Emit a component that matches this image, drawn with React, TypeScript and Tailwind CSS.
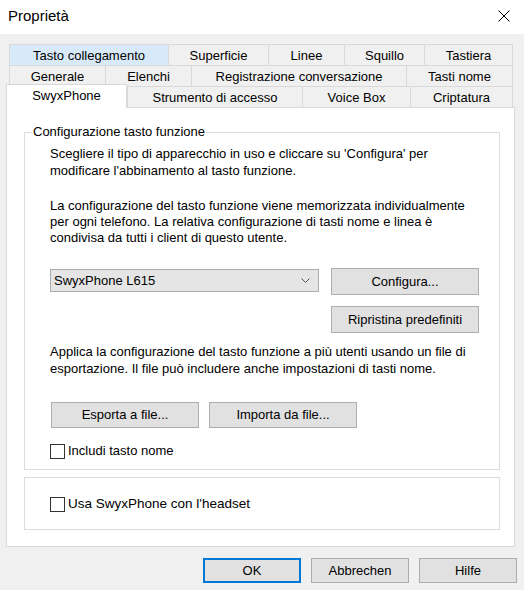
import type { ReactNode } from "react";

// ─── Data ────────────────────────────────────────────────────────────────────

type Tab = { label: string; w: string; hover?: boolean };

const row1: Tab[] = [
    { label: "Tasto collegamento", w: "w-[159px]", hover: true },
    { label: "Superficie", w: "w-[100px]" },
    { label: "Linee", w: "w-[76px]" },
    { label: "Squillo", w: "w-[80px]" },
    { label: "Tastiera", w: "w-[89px]" },
];

const row2: Tab[] = [
    { label: "Generale", w: "w-[96px]" },
    { label: "Elenchi", w: "w-[86px]" },
    { label: "Registrazione conversazione", w: "w-[215px]" },
    { label: "Tasti nome", w: "w-[107px]" },
];

const row3: Tab[] = [
    { label: "Strumento di accesso", w: "w-[175px]" },
    { label: "Voice Box", w: "w-[108px]" },
    { label: "Criptatura", w: "w-[103px]" },
];

// ─── Small pieces ────────────────────────────────────────────────────────────

function TabCell({ tab, last }: { tab: Tab; last: boolean }) {
    return (
        <div
            className={`${tab.w} shrink-0 flex items-center justify-center pt-px border-t border-l border-[#d9d9d9] ${last ? "border-r" : ""} ${tab.hover ? "bg-[#d8eaf9]" : "bg-[#f0f0f0]"}`}
        >
            {tab.label}
        </div>
    );
}

function TabRow({ tabs }: { tabs: Tab[] }) {
    return (
        <div className="flex h-[21px]">
            {tabs.map((t, i) => (
                <TabCell key={t.label} tab={t} last={i === tabs.length - 1} />
            ))}
        </div>
    );
}

function Button({
    children,
    className = "",
}: {
    children: ReactNode;
    className?: string;
}) {
    return (
        <div
            className={`shrink-0 flex items-center justify-center bg-[#e1e1e1] border border-[#adadad] ${className}`}
        >
            {children}
        </div>
    );
}

function Checkbox({ label, className = "" }: { label: string; className?: string }) {
    return (
        <div className="flex items-center gap-[3px]">
            <div className="w-[15px] h-[15px] bg-white border border-[#333333]" />
            <span className={className}>{label}</span>
        </div>
    );
}

// ─── Main component ──────────────────────────────────────────────────────────

export default function App() {
    return (
        <div
            className="w-[524px] h-[590px] bg-[#f0f0f0] text-black text-[13px] leading-[16px] overflow-hidden"
            style={{ fontFamily: '"Liberation Sans", Arial, sans-serif' }}
        >
            {/* Title bar */}
            <div className="h-[34px] bg-white flex items-center justify-between pl-[8px] pr-[14px]">
                <span className="text-[15px] -mt-[2px]">Proprietà</span>
                <svg width="12" height="12" viewBox="0 0 12 12" className="-mt-[3px]">
                    <path d="M0.5 0.5 L11.5 11.5 M11.5 0.5 L0.5 11.5" stroke="#000" strokeWidth="1" />
                </svg>
            </div>

            {/* Tabs */}
            <div className="mt-[10px] ml-[9px] w-[504px]">
                <TabRow tabs={row1} />
                <TabRow tabs={row2} />
                <div className="flex h-[21px]">
                    <div className="relative z-10 w-[121px] shrink-0 -ml-[3px] -mt-[2px] -mb-px bg-white border-t border-l border-r border-[#d9d9d9] flex items-center justify-center pb-[2px]">
                        SwyxPhone
                    </div>
                    {row3.map((t, i) => (
                        <TabCell key={t.label} tab={t} last={i === row3.length - 1} />
                    ))}
                </div>
            </div>

            {/* Page */}
            <div className="ml-[6px] w-[509px] h-[440px] bg-white border border-[#d9d9d9] pt-[24px] pl-[17px]">
                {/* Group: Configurazione tasto funzione */}
                <div className="relative w-[476px] h-[338px] border border-[#dcdcdc] pt-[12px] pl-[25px]">
                    <span className="absolute left-[7px] top-[-9px] bg-white px-px">
                        Configurazione tasto funzione
                    </span>

                    <p className="leading-[17px]">
                        Scegliere il tipo di apparecchio in uso e cliccare su 'Configura' per
                        <br />
                        modificare l'abbinamento al tasto funzione.
                    </p>

                    <p className="mt-[19px]">
                        La configurazione del tasto funzione viene memorizzata individualmente
                        <br />
                        per ogni telefono. La relativa configurazione di tasti nome e linea è
                        <br />
                        condivisa da tutti i client di questo utente.
                    </p>

                    <div className="mt-[22px] flex items-start gap-[12px]">
                        <div className="mt-px w-[269px] h-[23px] bg-[#e5e5e5] border border-[#adadad] flex items-center justify-between pl-[3px] pr-[8px]">
                            <span>SwyxPhone L615</span>
                            <svg width="9" height="5" viewBox="0 0 9 5">
                                <path d="M0.5 0.5 L4.5 4.5 L8.5 0.5" fill="none" stroke="#555" strokeWidth="1" />
                            </svg>
                        </div>
                        <Button className="w-[148px] h-[27px]">Configura...</Button>
                    </div>
                    <div className="mt-[11px] flex">
                        <Button className="ml-[281px] w-[148px] h-[27px]">Ripristina predefiniti</Button>
                    </div>

                    <p className="mt-[10px] leading-[17px]">
                        Applica la configurazione del tasto funzione a più utenti usando un file di
                        <br />
                        esportazione. Il file può includere anche impostazioni di tasti nome.
                    </p>

                    <div className="mt-[25px] flex gap-[10px]">
                        <Button className="ml-px w-[148px] h-[26px]">Esporta a file...</Button>
                        <Button className="w-[148px] h-[26px]">Importa da file...</Button>
                    </div>

                    <div className="mt-[15px]">
                        <Checkbox label="Includi tasto nome" />
                    </div>
                </div>

                {/* Group: headset */}
                <div className="mt-[7px] w-[476px] h-[53px] border border-[#dcdcdc] pt-[18px] pl-[25px]">
                    <Checkbox label="Usa SwyxPhone con l'headset" className="text-[13.5px]" />
                </div>
            </div>

            {/* Dialog buttons */}
            <div className="mt-[11px] flex justify-end gap-[10px] pr-[7px]">
                <div className="w-[98px] h-[25px] flex items-center justify-center bg-[#e1e1e1] border-2 border-[#0078d7]">
                    OK
                </div>
                <Button className="w-[98px] h-[25px]">Abbrechen</Button>
                <Button className="w-[98px] h-[25px]">Hilfe</Button>
            </div>
        </div>
    );
}
